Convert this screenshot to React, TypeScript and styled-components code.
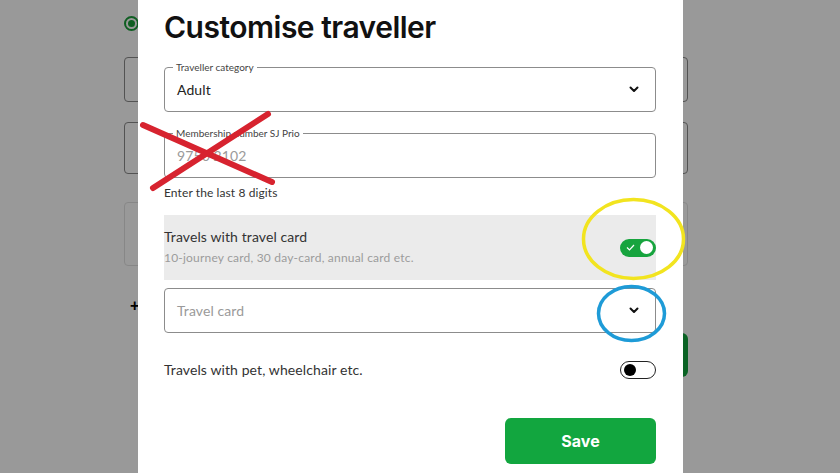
import React from "react";
import styled, { createGlobalStyle } from "styled-components";

const Global = createGlobalStyle`
  html, body { margin: 0; padding: 0; background: #ffffff; }
  body { font-family: Lato, "Open Sans", Arial, sans-serif; color: #222; }
  * { box-sizing: border-box; }
`;

/* ---------- page behind the dialog ---------- */
const Page = styled.div`
  width: 564px;
  margin-left: 124px;
  height: 473px;
  display: flex;
  flex-direction: column;
  padding-top: 16px;
`;
const Radio = styled.div`
  width: 15px;
  height: 15px;
  border-radius: 50%;
  border: 2px solid #1a9e3a;
  display: flex;
  align-items: center;
  justify-content: center;
  &::after { content: ""; width: 7px; height: 7px; border-radius: 50%; background: #1a9e3a; }
`;
const BgField = styled.div<{ $h: number; $mt: number; $light?: boolean }>`
  height: ${(p) => p.$h}px;
  margin-top: ${(p) => p.$mt}px;
  border: 1px solid ${(p) => (p.$light ? "#e2e2e2" : "#8a8a8a")};
  border-radius: 4px;
`;
const BgPlus = styled.div`
  margin-top: 33px;
  margin-left: 6px;
  font: 700 16px/14px Arial, sans-serif;
  color: #000;
`;
const BgButton = styled.div`
  align-self: flex-end;
  margin-top: 20px;
  width: 200px;
  height: 44px;
  border-radius: 6px;
  background: #12a43c;
`;

const Dim = styled.div`
  position: fixed;
  inset: 0;
  background: rgba(0, 0, 0, 0.4);
`;

/* ---------- dialog ---------- */
const Modal = styled.div`
  position: fixed;
  top: 0;
  left: 138px;
  width: 545px;
  height: 473px;
  background: #fff;
  padding: 0 27px 0 26px;
  display: flex;
  flex-direction: column;
`;
const Title = styled.h1`
  margin: 0;
  height: 67px;
  padding-top: 7px;
  font: 600 30px/40px Inter, "Open Sans", sans-serif;
  letter-spacing: -0.5px;
  color: #111;
`;
const Field = styled.div<{ $mt?: number }>`
  position: relative;
  height: 45px;
  margin-top: ${(p) => p.$mt ?? 0}px;
  border: 1px solid #8c8c8c;
  border-radius: 4px;
  display: flex;
  align-items: center;
  justify-content: space-between;
  padding: 0 16px 0 12px;
`;
const Legend = styled.span`
  position: absolute;
  top: -7px;
  left: 8px;
  padding: 0 3px;
  background: #fff;
  font: 400 10px/12px Lato, sans-serif;
  color: #444;
`;
const Value = styled.span<{ $muted?: boolean }>`
  font: 400 14px/18px Lato, sans-serif;
  color: ${(p) => (p.$muted ? "#9a9a9a" : "#222")};
  letter-spacing: 0.1px;
`;
const Helper = styled.div`
  margin-top: 8px;
  font: 400 12px/14px Lato, sans-serif;
  letter-spacing: 0.1px;
  color: #333;
`;
const CardBox = styled.div`
  margin-top: 15px;
  height: 65px;
  background: #ebebeb;
  display: flex;
  align-items: center;
  justify-content: space-between;
`;
const TextCol = styled.div`
  display: flex;
  flex-direction: column;
`;
const RowTitle = styled.span`
  font: 400 14px/18px Lato, sans-serif;
  letter-spacing: 0.1px;
  color: #333;
`;
const RowSub = styled.span`
  margin-top: 3px;
  font: 400 12px/18px Lato, sans-serif;
  letter-spacing: 0.2px;
  color: #9c9c9c;
`;
const PetRow = styled.div`
  margin-top: 28px;
  height: 18px;
  display: flex;
  align-items: center;
  justify-content: space-between;
`;
const Toggle = styled.div<{ $on?: boolean }>`
  width: 36px;
  height: 18px;
  border-radius: 9px;
  background: ${(p) => (p.$on ? "#17a43e" : "#fff")};
  border: ${(p) => (p.$on ? "none" : "1px solid #222")};
  display: flex;
  align-items: center;
  justify-content: ${(p) => (p.$on ? "space-between" : "flex-start")};
  padding: 0 ${(p) => (p.$on ? "3px 0 6px" : "3px")};
`;
const Knob = styled.div<{ $on?: boolean }>`
  width: ${(p) => (p.$on ? 13 : 12)}px;
  height: ${(p) => (p.$on ? 13 : 12)}px;
  border-radius: 50%;
  background: ${(p) => (p.$on ? "#fff" : "#000")};
`;
const Footer = styled.div`
  margin-top: 39px;
  display: flex;
  justify-content: flex-end;
`;
const SaveButton = styled.button`
  width: 151px;
  height: 46px;
  border: none;
  border-radius: 6px;
  background: #12a63f;
  color: #fff;
  font: 700 16px/20px Inter, "Open Sans", sans-serif;
`;

const Marks = styled.svg`
  position: fixed;
  inset: 0;
  pointer-events: none;
`;

const Chevron = () => (
  <svg width="10" height="7" viewBox="0 0 10 7">
    <path d="M1.5 1.5 L5 5 L8.5 1.5" fill="none" stroke="#111" strokeWidth="2" strokeLinecap="round" strokeLinejoin="round" />
  </svg>
);

const Check = () => (
  <svg width="9" height="7" viewBox="0 0 9 7">
    <path d="M1 3.5 L3.5 6 L8 1" fill="none" stroke="#fff" strokeWidth="1.2" />
  </svg>
);

export default function App() {
  return (
    <>
      <Global />
      <Page>
        <Radio />
        <BgField $h={45} $mt={26} />
        <BgField $h={52} $mt={20} />
        <BgField $h={64} $mt={28} $light />
        <BgPlus>+</BgPlus>
        <BgButton />
      </Page>
      <Dim />
      <Modal>
        <Title>Customise traveller</Title>
        <Field>
          <Legend>Traveller category</Legend>
          <Value>Adult</Value>
          <Chevron />
        </Field>
        <Field $mt={21}>
          <Legend>Membership number SJ Prio</Legend>
          <Value $muted>9750 2102</Value>
        </Field>
        <Helper>Enter the last 8 digits</Helper>
        <CardBox>
          <TextCol>
            <RowTitle>Travels with travel card</RowTitle>
            <RowSub>10-journey card, 30 day-card, annual card etc.</RowSub>
          </TextCol>
          <Toggle $on>
            <Check />
            <Knob $on />
          </Toggle>
        </CardBox>
        <Field $mt={8}>
          <Value $muted>Travel card</Value>
          <Chevron />
        </Field>
        <PetRow>
          <RowTitle>Travels with pet, wheelchair etc.</RowTitle>
          <Toggle>
            <Knob />
          </Toggle>
        </PetRow>
        <Footer>
          <SaveButton>Save</SaveButton>
        </Footer>
      </Modal>
      <Marks width="840" height="473" viewBox="0 0 840 473">
        <path d="M143 125 L272 182" stroke="#d7232f" strokeWidth="6" strokeLinecap="round" />
        <path d="M268 114 L153 188" stroke="#d7232f" strokeWidth="6" strokeLinecap="round" />
        <ellipse cx="633.5" cy="239" rx="50" ry="39.5" fill="none" stroke="#f2e41f" strokeWidth="3.5" />
        <ellipse cx="631.5" cy="313.5" rx="33" ry="27" fill="none" stroke="#1e9bd7" strokeWidth="3.5" />
      </Marks>
    </>
  );
}
